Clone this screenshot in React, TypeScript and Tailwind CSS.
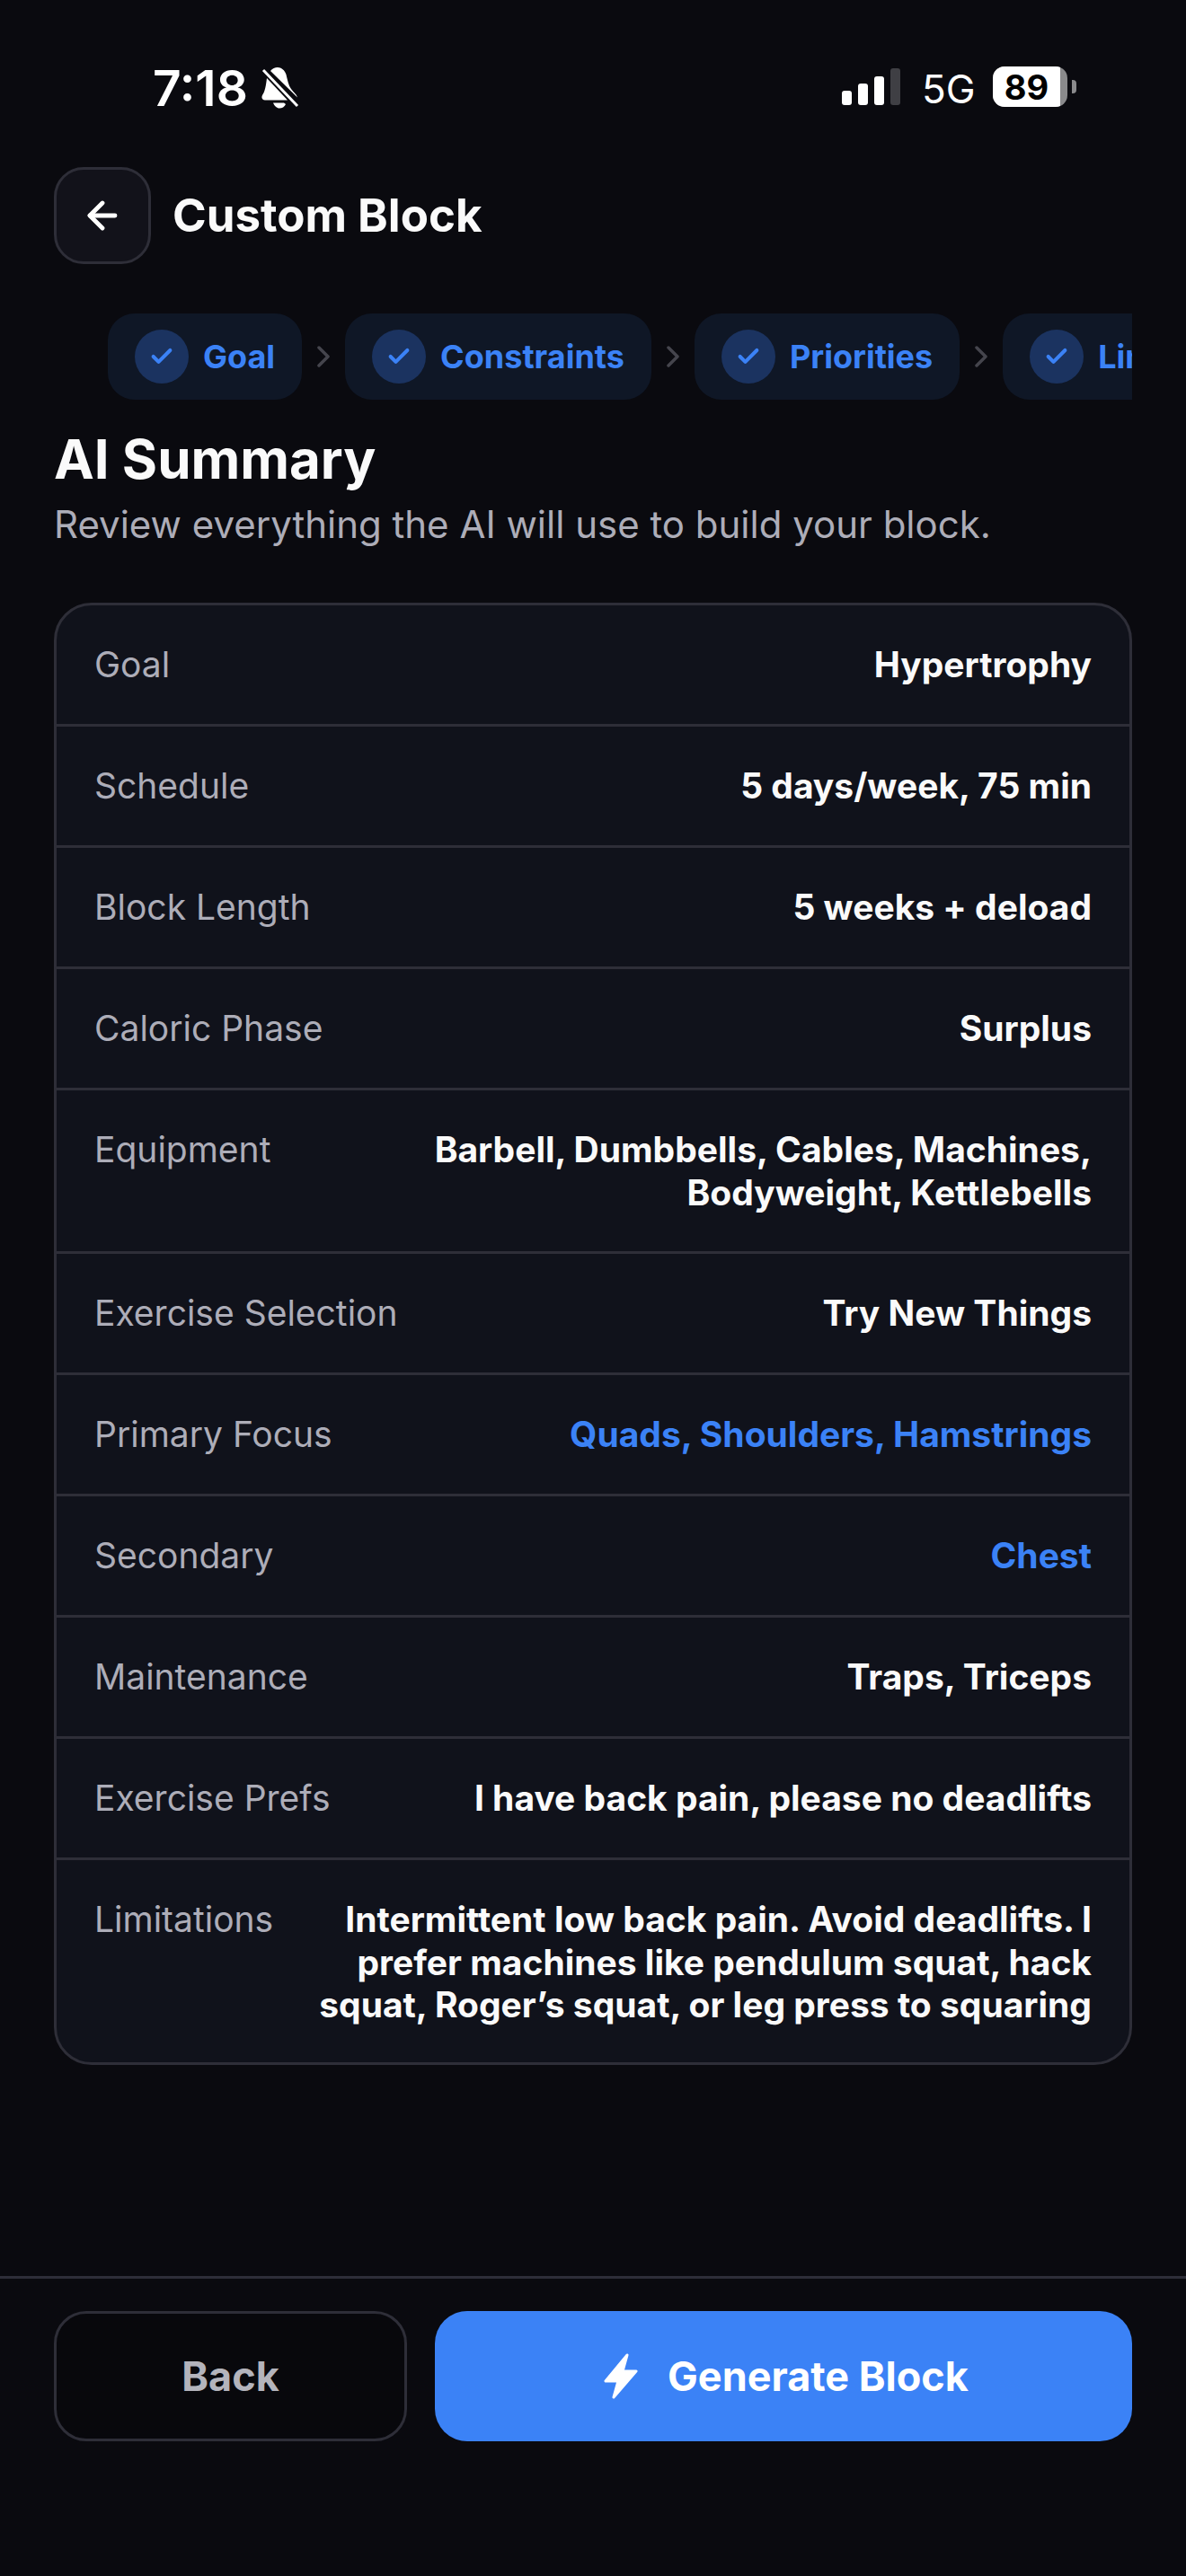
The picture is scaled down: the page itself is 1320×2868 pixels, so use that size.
import React from 'react';
import { ArrowLeft, Check } from 'lucide-react';

const steps = ['Goal', 'Constraints', 'Priorities', 'Limitations'];

const rows = [
  { label: 'Goal', value: 'Hypertrophy' },
  { label: 'Schedule', value: '5 days/week, 75 min' },
  { label: 'Block Length', value: '5 weeks + deload' },
  { label: 'Caloric Phase', value: 'Surplus' },
  { label: 'Equipment', value: 'Barbell, Dumbbells, Cables, Machines, Bodyweight, Kettlebells' },
  { label: 'Exercise Selection', value: 'Try New Things' },
  { label: 'Primary Focus', value: 'Quads, Shoulders, Hamstrings', accent: true },
  { label: 'Secondary', value: 'Chest', accent: true },
  { label: 'Maintenance', value: 'Traps, Triceps' },
  { label: 'Exercise Prefs', value: 'I have back pain, please no deadlifts' },
  { label: 'Limitations', value: 'Intermittent low back pain. Avoid deadlifts. I prefer machines like pendulum squat, hack squat, Roger’s squat, or leg press to squaring' },
];

function MutedBell() {
  return (
    <svg width="42" height="46" viewBox="0 0 42 46" fill="none" className="shrink-0">
      <path d="M10 4C12 1.500 15 0 18 0c4 0 8 3 9.500 8 1.500 6 2.500 12 5.500 16 3 4 6 6 7 9.500Z" fill="white" />
      <path d="M6 12 29 36.500H4c-3 0-4.500-2.500-3-5.500C4 27 5 20 6 12Z" fill="white" />
      <path d="M13 39.500h12l2 1.500c-1.500 3-4 4.500-7 4.500s-5.500-2.500-7-6Z" fill="white" />
      <path d="M2 3 40 43" stroke="white" strokeWidth="3" />
    </svg>
  );
}

function Bolt() {
  return (
    <svg width="38" height="51" viewBox="0 0 38 51" className="shrink-0">
      <path d="M26 2 2 31H16L11 49 36 20H21Z" fill="white" stroke="white" strokeWidth="3" strokeLinejoin="round" />
    </svg>
  );
}

function Chevron() {
  return (
    <svg width="14" height="24" viewBox="0 0 14 24" fill="none" className="mx-[17px] shrink-0">
      <path d="M2 2 12 12 2 22" stroke="#45454d" strokeWidth="3.500" strokeLinecap="round" strokeLinejoin="round" />
    </svg>
  );
}

function StatusBar() {
  return (
    <div className="flex h-[180px] items-start justify-between pt-[74px] pl-[170px] pr-[122px]">
      <div className="flex items-start gap-[15px] h-[46px]">
        <span className="mt-[2px] text-[55px] leading-[45px] font-semibold text-white">7:18</span>
        <div className="mt-[1px]"><MutedBell /></div>
      </div>
      <div className="flex items-end h-[45px]">
        <div className="flex items-end gap-[7px] mb-[2px]">
          <div className="w-[11px] h-[16px] rounded-[3px] bg-white" />
          <div className="w-[11px] h-[24px] rounded-[3px] bg-white" />
          <div className="w-[11px] h-[32px] rounded-[3px] bg-white" />
          <div className="w-[11px] h-[41px] rounded-[3px] bg-[#3f3f44]" />
        </div>
        <span className="ml-[24px] w-[56px] mb-[4px] text-[44px] leading-[32px] text-white font-normal whitespace-nowrap">5G</span>
        <div className="ml-[23px] flex items-center">
          <div className="relative w-[83px] h-[45px] rounded-[13px] bg-[#8a8a8c] overflow-hidden">
            <div className="absolute inset-y-0 left-0 w-[75px] bg-white flex items-center justify-center">
              <span className="text-[38px] leading-none font-bold text-black">89</span>
            </div>
          </div>
          <div className="ml-[5px] w-[5px] h-[15px] rounded-r-[4px] bg-[#8a8a8c]" />
        </div>
      </div>
    </div>
  );
}

export default function App() {
  return (
    <div className="min-h-[2868px] flex flex-col bg-[#0a0a0f] text-white font-['Inter','Liberation_Sans',sans-serif]">
      <StatusBar />

      <div className="flex items-center gap-[24px] px-[60px] mt-[6px]">
        <button className="flex items-center justify-center w-[108px] h-[108px] rounded-[33px] border-[3px] border-[#2e2e38] bg-[#12121a]">
          <ArrowLeft className="w-[48px] h-[48px] text-white" strokeWidth={2.4} />
        </button>
        <h1 className="text-[51px] leading-[60px] font-bold text-[#fafafa]">Custom Block</h1>
      </div>

      <div className="mx-[60px] mt-[55px] flex items-center overflow-hidden pl-[60px]">
        {steps.map((s, i) => (
          <React.Fragment key={s}>
            {i > 0 && <Chevron />}
            <div className="flex shrink-0 items-center gap-[16px] h-[96px] pl-[30px] pr-[30px] rounded-[30px] bg-[#0f1726]">
              <div className="flex items-center justify-center w-[60px] h-[60px] rounded-full bg-[#1b3360]">
                <Check className="w-[28px] h-[28px] text-[#3b82f6]" strokeWidth={3.5} />
              </div>
              <span className="text-[36px] leading-[44px] font-bold text-[#3b82f6]">{s}</span>
            </div>
          </React.Fragment>
        ))}
      </div>

      <div className="px-[60px] mt-[30px]">
        <h2 className="text-[60px] leading-[72px] font-bold text-[#fafafa]">AI Summary</h2>
        <p className="mt-[10px] text-[42px] leading-[54px] text-[#adadb8]">Review everything the AI will use to build your block.</p>

        <div className="mt-[60px] rounded-[42px] border-[3px] border-[#2e2e38] bg-[#10121b] overflow-hidden">
          {rows.map((r, i) => (
            <div key={r.label} className={`flex justify-between gap-[48px] px-[42px] ${i < rows.length - 1 ? 'py-[42px] border-b-[3px] border-[#2e2e38]' : 'pt-[42px] pb-[40px]'}`}>
              <span className="shrink-0 text-[39px] leading-[48px] text-[#adadb8]">{r.label}</span>
              <span className={`text-[39px] leading-[47.5px] font-bold text-right max-w-[860px] ${r.accent ? 'text-[#3b82f6]' : 'text-[#fafafa]'}`}>{r.value}</span>
            </div>
          ))}
        </div>
      </div>

      <div className="mt-auto border-t-[3px] border-[#2e2e38] flex gap-[31px] px-[60px] pt-[36px] pb-[150px]">
        <button className="flex items-center justify-center w-[393px] h-[145px] rounded-[36px] border-[3px] border-[#2e2e38] bg-[#08080c] text-[45px] font-bold text-[#b4b4bc]">Back</button>
        <button className="flex flex-1 items-center justify-center gap-[33px] h-[145px] pl-[6px] rounded-[36px] bg-[#3b82f6] text-[45px] font-bold text-white">
          <Bolt />
          Generate Block
        </button>
      </div>
    </div>
  );
}
